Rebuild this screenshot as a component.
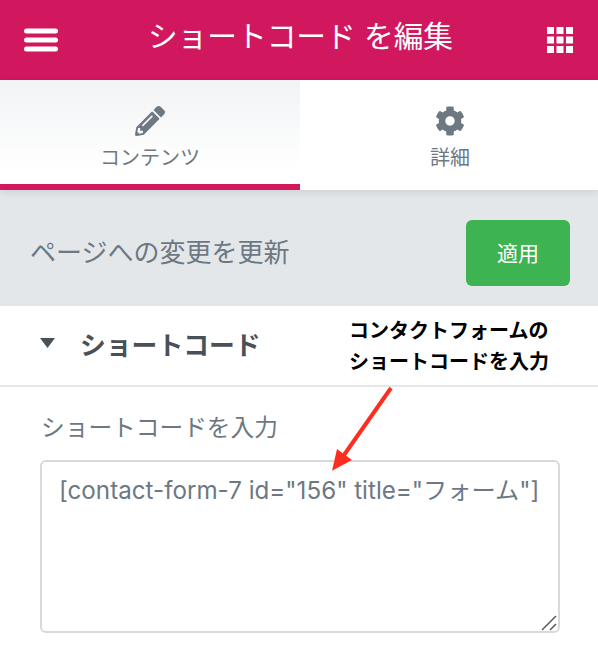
<style>
  :global(body) {
    margin: 0;
    background: #fff;
    font-family: "Liberation Sans", "Noto Sans CJK JP", sans-serif;
  }

  .panel {
    position: relative;
    width: 598px;
    height: 652px;
    overflow: hidden;
  }

  .header {
    height: 80px;
    background: #d1175e;
    color: #fff;
    display: flex;
    align-items: center;
    justify-content: space-between;
    padding: 0 25px 0 24px;
    box-sizing: border-box;
  }

  .header h1 {
    margin: 0 4px 6px 0;
    font-size: 29.7px;
    font-weight: 400;
    line-height: 1;
  }

  .tabs {
    display: flex;
    height: 110px;
    position: relative;
    z-index: 1;
    box-shadow: 0 2px 8px rgba(0, 0, 0, 0.1);
  }

  .tab {
    flex: 0 0 300px;
    background: #fff;
    color: #6d7882;
    display: flex;
    flex-direction: column;
    align-items: center;
    padding-top: 26px;
    box-sizing: border-box;
    font-size: 20px;
    line-height: 24px;
  }

  .tab svg {
    margin-bottom: 10px;
  }

  .tab.active {
    background: linear-gradient(#f1f3f5, #fff 85%);
    border-bottom: 6px solid #d1175e;
  }

  .update {
    height: 116px;
    background: #e4e7ea;
    display: flex;
    align-items: center;
    justify-content: space-between;
    padding: 10px 28px 0 30px;
    box-sizing: border-box;
  }

  .update span {
    margin-bottom: 5px;
    color: #6d7882;
    font-size: 26px;
  }

  .update button {
    width: 104px;
    height: 66px;
    padding: 0 0 2px;
    border: 0;
    border-radius: 6px;
    background: #3db351;
    color: #fff;
    font: inherit;
    font-size: 21px;
  }

  .section-title {
    height: 81px;
    display: flex;
    align-items: center;
    padding: 0 0 5px 40px;
    box-sizing: border-box;
    border-bottom: 2px solid #e4e7ea;
    color: #495157;
    font-size: 25.8px;
    font-weight: 700;
    gap: 25px;
  }

  .field {
    padding: 0 38px 0 40px;
  }

  .field label {
    display: block;
    margin: 24px 0 0 1px;
    color: #6d7882;
    font-size: 23.7px;
    line-height: 34px;
  }

  .textarea {
    position: relative;
    margin-top: 15px;
    height: 173px;
    box-sizing: border-box;
    border: 2px solid #d5dadf;
    border-radius: 6px;
    padding: 12px 17px;
    color: #6d7882;
    font-family: Inter, "Noto Sans CJK JP", sans-serif;
    font-size: 24.2px;
    line-height: 34px;
    white-space: nowrap;
  }

  .grip {
    position: absolute;
    right: 1px;
    bottom: 0;
  }

  .note {
    position: absolute;
    left: 349px;
    top: 316px;
    color: #000;
    font-size: 20px;
    font-weight: 700;
    line-height: 31px;
  }

  .arrow {
    position: absolute;
    left: 320px;
    top: 380px;
  }
</style>

<div class="panel">
  <div class="header">
    <svg width="34" height="24" viewBox="0 0 34 24">
      <g stroke="#fff" stroke-width="5" stroke-linecap="round">
        <line x1="2.5" y1="3" x2="31.5" y2="3" />
        <line x1="2.5" y1="12" x2="31.5" y2="12" />
        <line x1="2.5" y1="21" x2="31.5" y2="21" />
      </g>
    </svg>
    <h1>ショートコード を編集</h1>
    <svg width="26" height="26" viewBox="0 0 26 26" fill="#fff">
      <rect x="0" y="0" width="7" height="7" /><rect x="9.5" y="0" width="7" height="7" /><rect x="19" y="0" width="7" height="7" />
      <rect x="0" y="9.5" width="7" height="7" /><rect x="9.5" y="9.5" width="7" height="7" /><rect x="19" y="9.5" width="7" height="7" />
      <rect x="0" y="19" width="7" height="7" /><rect x="9.5" y="19" width="7" height="7" /><rect x="19" y="19" width="7" height="7" />
    </svg>
  </div>

  <div class="tabs">
    <div class="tab active">
      <svg width="30" height="30" viewBox="0 0 512 512" fill="#6d7882">
        <path d="M497.9 142.1l-46.1 46.1c-4.700 4.700-12.300 4.700-17 0l-111-111c-4.700-4.700-4.700-12.300 0-17l46.100-46.100c18.700-18.700 49.100-18.700 67.900 0l60.100 60.100c18.800 18.700 18.800 49.100 0 67.900zM284.200 99.800L21.600 362.400.4 483.900c-2.900 16.400 11.400 30.600 27.800 27.800l121.500-21.300 262.600-262.600c4.700-4.700 4.700-12.300 0-17l-111-111c-4.800-4.700-12.400-4.700-17.100 0zM124.100 339.900c-5.500-5.500-5.500-14.300 0-19.800l154-154c5.500-5.500 14.300-5.500 19.800 0s5.500 14.300 0 19.800l-154 154c-5.500 5.500-14.300 5.500-19.800 0zM88 424h48v36.300l-64.500 11.300-31.100-31.100L51.700 376H88v48z" />
      </svg>
      <span>コンテンツ</span>
    </div>
    <div class="tab">
      <svg width="30" height="30" viewBox="0 0 512 512" fill="#6d7882">
        <path d="M487.400 315.700l-42.600-24.600c4.300-23.200 4.300-47 0-70.200l42.600-24.600c4.900-2.800 7.100-8.600 5.500-14-11.100-35.600-30-67.800-54.700-94.600-3.800-4.100-10-5.100-14.800-2.300L380.800 110c-17.900-15.400-38.500-27.300-60.800-35.100V25.800c0-5.600-3.900-10.500-9.400-11.700-36.700-8.200-74.300-7.800-109.200 0-5.500 1.200-9.400 6.100-9.400 11.700V75c-22.200 7.900-42.800 19.800-60.800 35.100L88.700 85.500c-4.900-2.800-11-1.900-14.800 2.300-24.700 26.700-43.600 58.900-54.700 94.600-1.700 5.400.6 11.200 5.500 14L67.300 221c-4.300 23.200-4.300 47 0 70.200l-42.600 24.600c-4.900 2.800-7.100 8.600-5.500 14 11.100 35.600 30 67.800 54.700 94.600 3.800 4.100 10 5.100 14.800 2.300l42.600-24.600c17.900 15.400 38.500 27.300 60.800 35.100v49.200c0 5.600 3.900 10.500 9.400 11.700 36.700 8.200 74.300 7.800 109.200 0 5.500-1.200 9.400-6.100 9.400-11.700v-49.200c22.200-7.900 42.800-19.800 60.800-35.100l42.600 24.600c4.900 2.800 11 1.900 14.800-2.300 24.700-26.700 43.600-58.900 54.700-94.600 1.500-5.500-.7-11.300-5.600-14.100zM256 336c-44.100 0-80-35.900-80-80s35.900-80 80-80 80 35.900 80 80-35.900 80-80 80z" />
      </svg>
      <span>詳細</span>
    </div>
  </div>

  <div class="update">
    <span>ページへの変更を更新</span>
    <button>適用</button>
  </div>

  <div class="section-title">
    <svg width="15" height="10" viewBox="0 0 15 10" fill="#495157"><path d="M0 0h15L7.500 10z" /></svg>
    <span>ショートコード</span>
  </div>

  <div class="field">
    <label for="code">ショートコードを入力</label>
    <div class="textarea" id="code">
      [contact-form-7 id="156" title="フォーム"]
      <svg class="grip" width="18" height="18" viewBox="0 0 18 18" stroke="#555" stroke-width="1.500" fill="none">
        <line x1="3" y1="17" x2="17" y2="3" />
        <line x1="11" y1="17" x2="17" y2="11" />
      </svg>
    </div>
  </div>

  <div class="note">コンタクトフォームの<br />ショートコードを入力</div>

  <svg class="arrow" width="80" height="95" viewBox="0 0 80 95">
    <line x1="71" y1="8" x2="24" y2="75" stroke="#ff2d1f" stroke-width="4" />
    <path d="M12 90.700L17 69 32 80z" fill="#ff2d1f" />
  </svg>
</div>
